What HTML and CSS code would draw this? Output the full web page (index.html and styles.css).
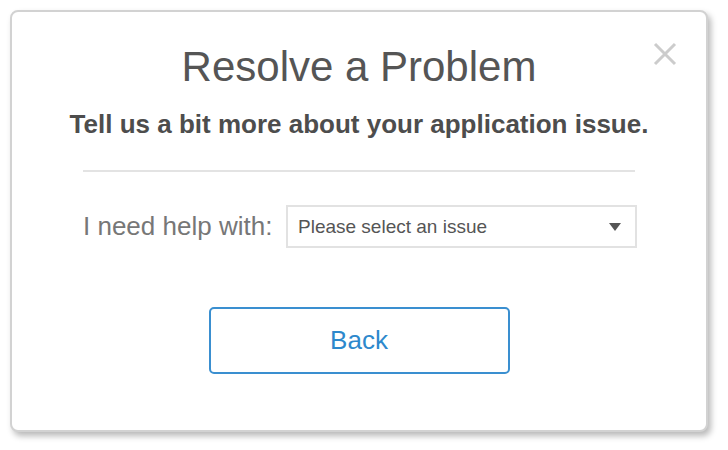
FILE: index.html
```html
<!DOCTYPE html>
<html>
<head>
<meta charset="utf-8">
<link rel="stylesheet" href="styles.css">
</head>
<body>
<div class="page">
  <div class="dialog">
    <button class="close" aria-label="Close">
      <svg width="24" height="24" viewBox="0 0 24 24"><path d="M2 2 L22 22 M22 2 L2 22" stroke="#cccccc" stroke-width="3" fill="none"/></svg>
    </button>
    <h1 class="title">Resolve a Problem</h1>
    <p class="subtitle">Tell us a bit more about your application issue.</p>
    <div class="content">
      <hr class="divider">
      <div class="row">
        <span class="label">I need help with:</span>
        <div class="select">
          <span class="select-text">Please select an issue</span>
          <svg class="caret" width="12" height="8" viewBox="0 0 12 8"><path d="M0 0 H12 L6 8 Z" fill="#555"/></svg>
        </div>
      </div>
      <div class="actions">
        <button class="back">Back</button>
      </div>
    </div>
  </div>
</div>
</body>
</html>
```
FILE: styles.css
```css
html, body {
  margin: 0;
  padding: 0;
  background: #ffffff;
  font-family: "Liberation Sans", Arial, sans-serif;
}
.page {
  padding: 10px 20px 18px 10px;
}
.dialog {
  position: relative;
  box-sizing: border-box;
  width: 698px;
  height: 422px;
  border: 2px solid #d2d2d2;
  border-radius: 8px;
  background: #fff;
  box-shadow: 3px 4px 6px rgba(0,0,0,0.28);
  display: flex;
  flex-direction: column;
  align-items: center;
}
.close {
  position: absolute;
  top: 30px;
  right: 29px;
  padding: 0;
  border: 0;
  background: none;
  width: 24px;
  height: 24px;
}
.close svg { display: block; }
.title {
  margin: 30px 0 0;
  font-size: 42px;
  font-weight: normal;
  color: #555555;
  line-height: 50px;
  white-space: nowrap;
}
.subtitle {
  margin: 17px 0 0;
  font-size: 26px;
  font-weight: bold;
  color: #4d4d4d;
  line-height: 30px;
  white-space: nowrap;
}
.content {
  width: 552px;
  margin-top: 31px;
}
.divider {
  border: 0;
  border-top: 2px solid #e3e3e3;
  margin: 0;
}
.row {
  display: flex;
  align-items: center;
  margin-top: 33px;
  margin-right: -2px;
}
.label {
  flex: none;
  font-size: 26px;
  color: #777777;
  width: 203px;
  white-space: nowrap;
}
.select {
  box-sizing: border-box;
  flex: 1;
  height: 43px;
  border: 2px solid #e2e2e2;
  display: flex;
  align-items: center;
  justify-content: space-between;
  padding: 0 14px 0 10px;
}
.select-text {
  font-size: 19px;
  color: #555555;
}
.caret { display: block; }
.actions {
  display: flex;
  justify-content: center;
  margin-top: 59px;
}
.back {
  box-sizing: border-box;
  width: 301px;
  height: 67px;
  border: 2px solid #3a8fd0;
  border-radius: 5px;
  background: #fff;
  color: #2d88cc;
  font-family: "Liberation Sans", Arial, sans-serif;
  font-size: 26px;
  padding: 0;
}
```
